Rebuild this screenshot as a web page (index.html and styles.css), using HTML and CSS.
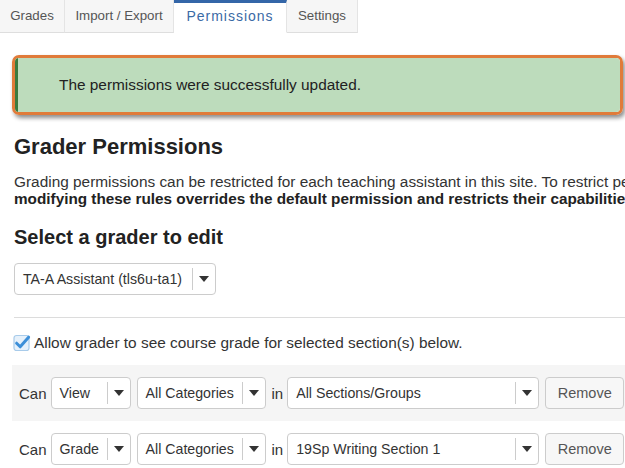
FILE: index.html
```html
<!DOCTYPE html>
<html>
<head>
<meta charset="utf-8">
<link rel="stylesheet" href="styles.css">
</head>
<body>
<div class="page">
  <nav class="tabs">
    <div class="tab tab-grades">Grades</div>
    <div class="tab tab-import">Import / Export</div>
    <div class="tab tab-perm active">Permissions</div>
    <div class="tab tab-settings">Settings</div>
  </nav>

  <div class="alert-frame">
    <div class="alert">The permissions were successfully updated.</div>
  </div>

  <main class="content">
    <h2 class="title">Grader Permissions</h2>
    <p class="intro">Grading permissions can be restricted for each teaching assistant in this site. To restrict permissions, select a grader below.<br><strong>modifying these rules overrides the default permission and restricts their capabilities.</strong></p>

    <h3 class="subtitle">Select a grader to edit</h3>

    <div class="select grader-select">
      <span class="select-text">TA-A Assistant (tls6u-ta1)</span>
      <span class="select-arrow"><span class="caret"></span></span>
    </div>

    <hr class="divider">

    <label class="check-row">
      <svg class="checkbox" width="18" height="18" viewBox="0 0 18 18">
        <rect x="1" y="1.5" width="15" height="15" rx="2.5" fill="#e6f1fb" stroke="#a8cbea" stroke-width="1.2"/>
        <path d="M3.6 9.2 L7.2 12.8 L15.6 3.2" fill="none" stroke="#3d8fd8" stroke-width="3" stroke-linecap="round" stroke-linejoin="round"/>
      </svg>
      <span>Allow grader to see course grade for selected section(s) below.</span>
    </label>

    <div class="rules">
      <div class="rule shaded">
        <span class="word">Can</span>
        <div class="select sel-action"><span class="select-text">View</span><span class="select-arrow"><span class="caret"></span></span></div>
        <div class="select sel-cat"><span class="select-text">All Categories</span><span class="select-arrow"><span class="caret"></span></span></div>
        <span class="word">in</span>
        <div class="select sel-section"><span class="select-text">All Sections/Groups</span><span class="select-arrow"><span class="caret"></span></span></div>
        <button class="btn-remove">Remove</button>
      </div>
      <div class="rule">
        <span class="word">Can</span>
        <div class="select sel-action"><span class="select-text">Grade</span><span class="select-arrow"><span class="caret"></span></span></div>
        <div class="select sel-cat"><span class="select-text">All Categories</span><span class="select-arrow"><span class="caret"></span></span></div>
        <span class="word">in</span>
        <div class="select sel-section"><span class="select-text">19Sp Writing Section 1</span><span class="select-arrow"><span class="caret"></span></span></div>
        <button class="btn-remove">Remove</button>
      </div>
    </div>
  </main>
</div>
</body>
</html>
```

FILE: styles.css
```css
html, body {
  margin: 0;
  padding: 0;
  background: #fff;
}
body {
  width: 625px;
  height: 468px;
  overflow: hidden;
  font-family: "Liberation Sans", Arial, sans-serif;
  color: #333;
}
.page {
  width: 800px;
}

/* Tabs */
.tabs {
  display: flex;
  height: 33px;
}
.tab {
  box-sizing: border-box;
  height: 33px;
  line-height: 31px;
  text-align: center;
  font-size: 13.3px;
  color: #555;
  background: #f6f6f6;
  border-right: 1px solid #e4e4e4;
  border-bottom: 1px solid #dedede;
}
.tab-grades { width: 65px; }
.tab-import { width: 109px; }
.tab-perm { width: 113px; }
.tab-settings { width: 71px; }
.tab.active {
  background: #fff;
  color: #3a6aa5;
  font-size: 14px;
  letter-spacing: 1px;
  border-top: 3px solid #3466a8;
  border-bottom-color: #fff;
  line-height: 27px;
}

/* Alert with highlight frame */
.alert-frame {
  box-sizing: border-box;
  margin: 22px 0 0 12px;
  width: 611px;
  height: 60px;
  border: 3px solid #e07b3a;
  border-radius: 7px;
  box-shadow: 2px 3px 4px rgba(0, 0, 0, 0.45);
  overflow: hidden;
}
.alert {
  box-sizing: border-box;
  height: 100%;
  background: #bddcbc;
  border-left: 3px solid #3b7a3f;
  padding-left: 41px;
  display: flex;
  align-items: center;
  font-size: 15.4px;
  color: #222;
}

/* Content */
.content {
  padding-left: 14px;
}
.title {
  margin: 19px 0 0;
  font-size: 22px;
  line-height: 26px;
  font-weight: bold;
  color: #222;
}
.intro {
  margin: 13px 0 0;
  font-size: 15.4px;
  line-height: 17px;
  white-space: nowrap;
  color: #333;
}
.intro strong {
  color: #222;
  font-size: 15.3px;
}
.subtitle {
  margin: 18px 0 0;
  font-size: 20px;
  line-height: 24px;
  font-weight: bold;
  color: #222;
}

/* Selects */
.select {
  box-sizing: border-box;
  height: 32px;
  border: 1px solid #ccc;
  border-radius: 4px;
  background: #fff;
  display: flex;
  align-items: center;
  font-size: 14.2px;
  color: #333;
}
.select-text {
  flex: 1;
  padding-left: 8px;
  white-space: nowrap;
  overflow: hidden;
}
.select-arrow {
  box-sizing: border-box;
  width: 23px;
  height: 22px;
  border-left: 1px solid #ccc;
  display: flex;
  align-items: center;
  justify-content: center;
}
.caret {
  width: 0;
  height: 0;
  border-left: 5px solid transparent;
  border-right: 5px solid transparent;
  border-top: 6px solid #333;
}
.grader-select {
  margin-top: 14px;
  width: 202px;
}

.divider {
  margin: 22px 0 0;
  border: 0;
  border-top: 1px solid #dcdcdc;
  height: 0;
}

.check-row {
  display: flex;
  align-items: center;
  gap: 3px;
  margin-top: 16px;
  font-size: 15.4px;
  color: #333;
}
.checkbox {
  display: block;
  margin-left: -1px;
}

/* Rules */
.rules {
  margin: 13px 0 0 -2px;
}
.rule {
  display: flex;
  align-items: center;
  height: 56px;
  padding-left: 7px;
  box-sizing: border-box;
}
.rule.shaded {
  background: #f5f5f5;
}
.word {
  font-size: 15px;
  color: #333;
  margin-right: 4px;
}
.sel-action {
  width: 80px;
  margin-right: 6px;
}
.sel-cat {
  width: 129px;
  margin-right: 6px;
}
.sel-section {
  width: 252px;
  margin-right: 6px;
}
.btn-remove {
  box-sizing: border-box;
  height: 32px;
  width: 79px;
  border: 1px solid #ccc;
  border-radius: 4px;
  background: #f7f7f7;
  color: #555;
  font-family: "Liberation Sans", Arial, sans-serif;
  font-size: 14.5px;
  padding: 0;
}
```
